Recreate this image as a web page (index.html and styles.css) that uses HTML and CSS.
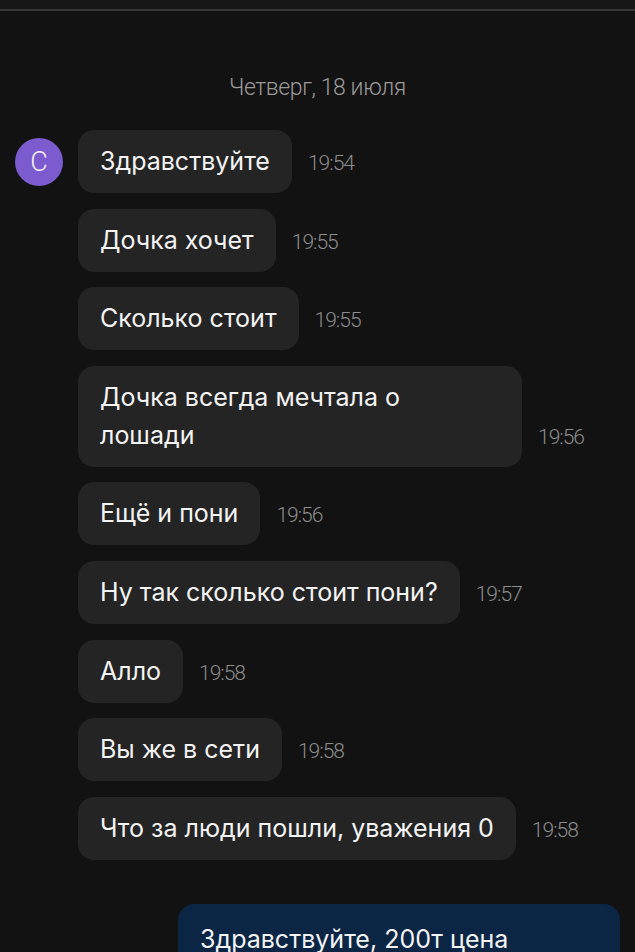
FILE: index.html
```html
<!DOCTYPE html>
<html lang="ru">
<head>
<meta charset="utf-8">
<link rel="stylesheet" href="styles.css">
</head>
<body>
<div class="topbar"></div>
<div class="chat">
  <div class="date">Четверг, 18 июля</div>
  <div class="group">
    <div class="avatar">С</div>
    <div class="msgs">
      <div class="row"><div class="bubble">Здравствуйте</div><span class="time">19:54</span></div>
      <div class="row"><div class="bubble">Дочка хочет</div><span class="time">19:55</span></div>
      <div class="row"><div class="bubble">Сколько стоит</div><span class="time">19:55</span></div>
      <div class="row"><div class="bubble">Дочка всегда мечтала о лошади</div><span class="time">19:56</span></div>
      <div class="row"><div class="bubble">Ещё и пони</div><span class="time">19:56</span></div>
      <div class="row"><div class="bubble">Ну так сколько стоит пони?</div><span class="time">19:57</span></div>
      <div class="row"><div class="bubble">Алло</div><span class="time">19:58</span></div>
      <div class="row"><div class="bubble">Вы же в сети</div><span class="time">19:58</span></div>
      <div class="row"><div class="bubble">Что за люди пошли, уважения 0</div><span class="time">19:58</span></div>
    </div>
  </div>
  <div class="out-row">
    <div class="bubble out">Здравствуйте, 200т цена</div>
  </div>
</div>
</body>
</html>
```

FILE: styles.css
```css
* { box-sizing: border-box; }
html, body {
  margin: 0;
  padding: 0;
  background: #121212;
  height: 952px;
  overflow: hidden;
}
body {
  font-family: Inter, "Noto Sans", sans-serif;
  color: #f2f2f2;
}
.topbar {
  height: 11px;
  background: #171717;
  border-bottom: 2px solid #363636;
}
.chat {
  padding: 63px 15px 0 15px;
}
.date {
  text-align: center;
  font-family: Roboto, sans-serif;
  color: #9a9a9a;
  font-size: 23px;
  font-weight: 300;
  letter-spacing: -0.4px;
  line-height: 28px;
  height: 28px;
}
.group {
  display: flex;
  align-items: flex-start;
  gap: 15px;
  margin-top: 28px;
}
.avatar {
  flex: none;
  width: 48px;
  height: 48px;
  border-radius: 50%;
  background: #7b5bcd;
  color: #f4eefc;
  font-family: Roboto, sans-serif;
  font-size: 27px;
  font-weight: 300;
  display: flex;
  align-items: center;
  justify-content: center;
  margin-top: 8px;
}
.msgs {
  display: flex;
  flex-direction: column;
  gap: 15.6px;
}
.row {
  display: flex;
  align-items: flex-end;
  gap: 16px;
}
.bubble {
  background: #242424;
  border-radius: 16px;
  padding: 12px 22px 13px 22px;
  max-width: 444px;
  font-size: 25px;
  line-height: 38px;
  color: #f4f4f4;
  letter-spacing: 0;
}
.time {
  flex: none;
  font-family: Roboto, sans-serif;
  color: #8c8c8c;
  font-size: 21px;
  font-weight: 300;
  letter-spacing: -1px;
  line-height: 24px;
  padding-bottom: 18px;
}
.out-row {
  display: flex;
  justify-content: flex-end;
  margin-top: 44px;
}
.bubble.out {
  background: #0b2545;
  width: 442px;
  max-width: none;
  height: 80px;
  border-radius: 16px 16px 0 0;
  padding-top: 16px;
}
```
